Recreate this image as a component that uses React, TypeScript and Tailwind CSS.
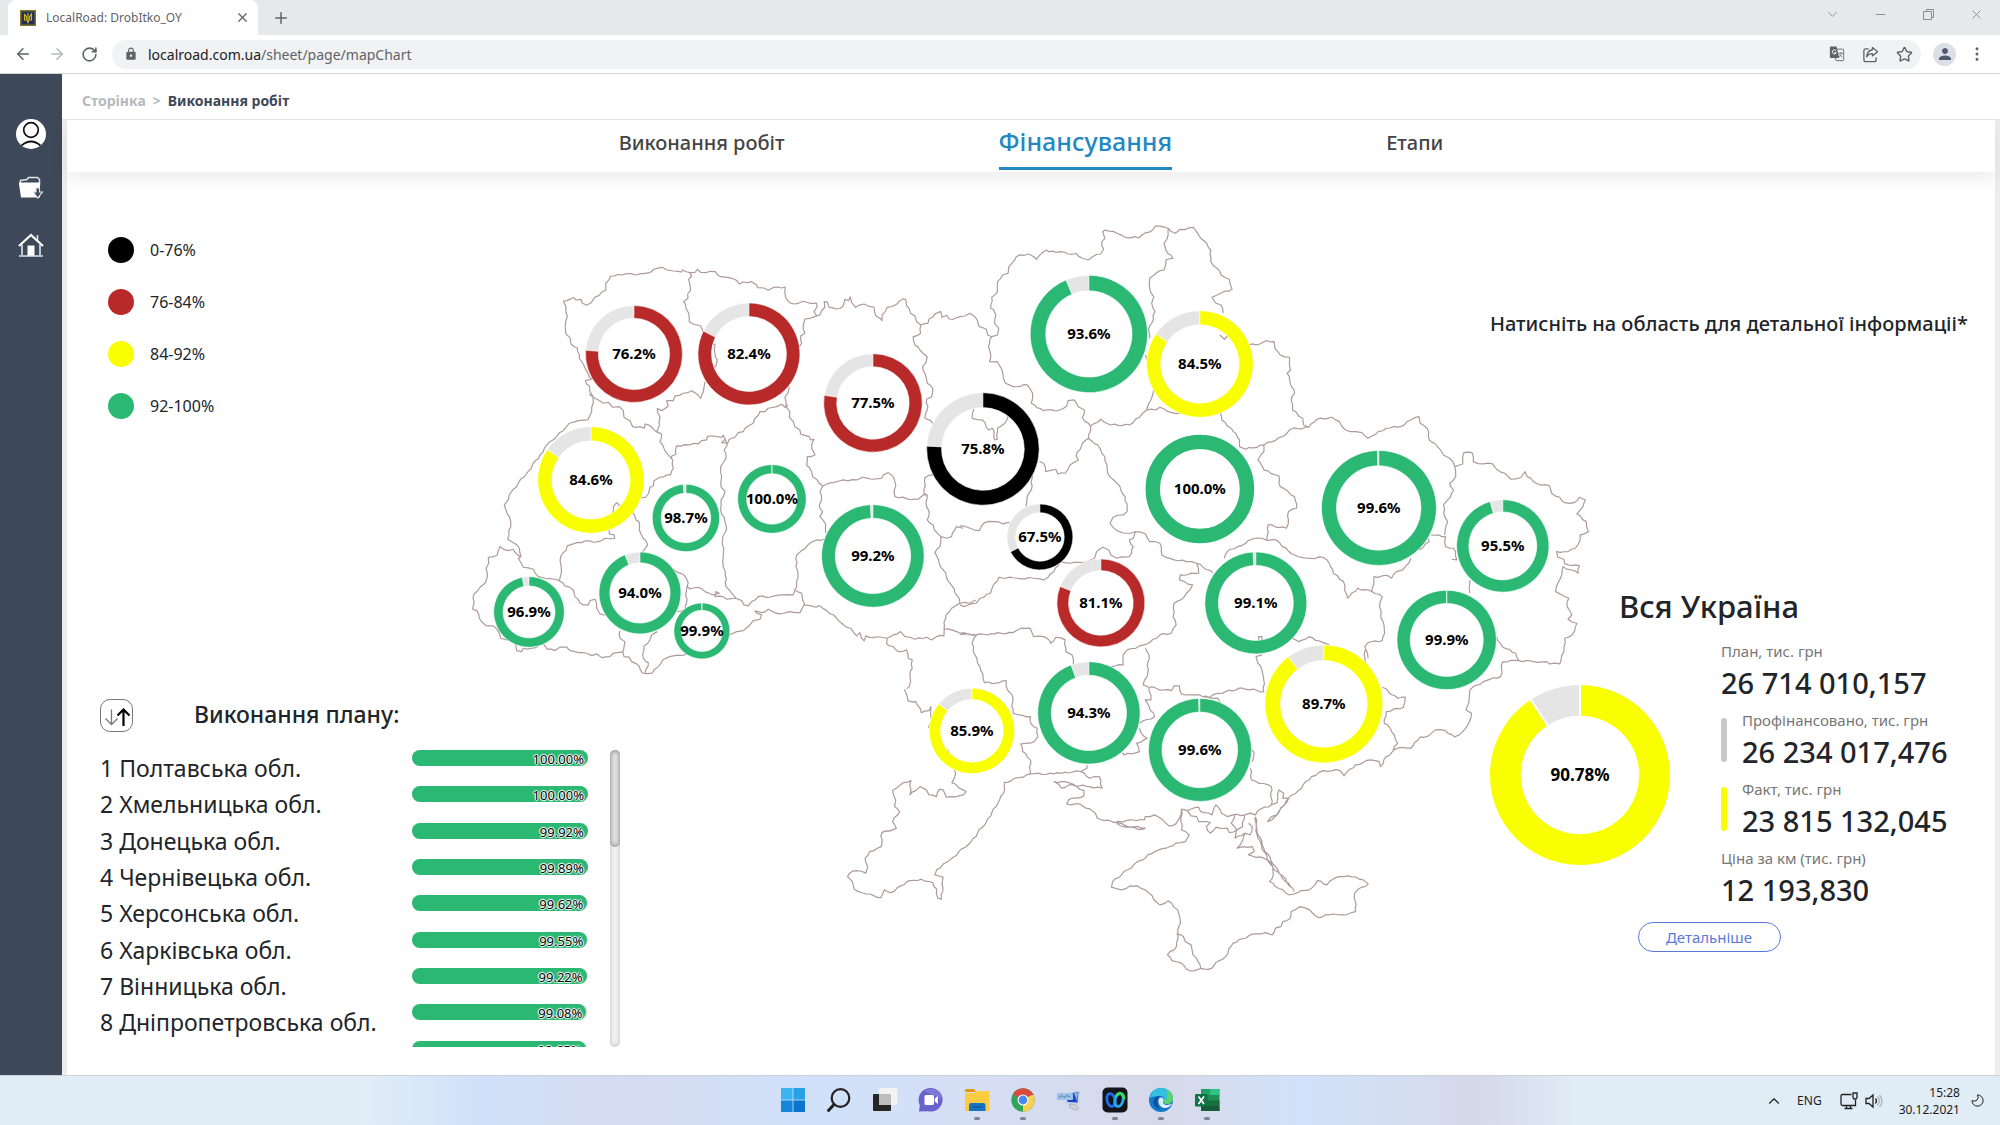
import React from "react";
import { ArrowLeft, ArrowRight, RotateCw, Plus, X, ChevronDown, ChevronUp, Minus, Star, MoreVertical, Moon } from "lucide-react";
import { MdLock, MdPerson } from "react-icons/md";

/* ---------- Map of the regions ---------- */

type Sheet = { ox: number; oy: number; sx: number; sy: number; lines: string[] };

// Border lines, kept per survey sheet: origin, units per pixel, polylines.
const SHEETS: Sheet[] = [
  {
    ox: 460, oy: 210, sx: 3, sy: 3,
    lines: [
      "310,273 341,263 348,270 363,268 367,280 380,286 394,278 404,262 425,247 438,240 437,220 452,198 485,195 500,191 526,195 555,190 570,188 582,178 607,172 622,180 640,183 665,186 668,180 690,188 706,187 712,178 722,187 752,184 766,185 782,200 808,203 822,207 838,222 850,216 875,215 890,225 893,233 912,234 925,241 942,232 976,231 977,262 990,279 1015,280 1030,274 1050,280 1070,280 1071,292 1062,305 1070,318 1080,314 1095,292 1093,275 1102,276 1108,292 1130,297 1150,288 1155,268 1166,272 1171,260 1175,278 1187,292 1212,282 1242,291 1248,318 1262,326 1266,332 1267,314 1282,292 1310,283 1318,274 1330,266 1338,270 1340,287 1348,297 1352,310 1365,318 1370,335 1383,345 1404,340 1408,326 1418,322 1426,311 1443,305 1446,322 1460,316 1468,327 1480,328 1500,320 1515,318 1530,310 1545,320 1552,330 1558,350",
      "310,273 318,290 322,320 316,345 318,372 330,383 333,402 352,414 358,445 370,462 378,480 395,508 377,512 380,523 388,527 390,545 399,560 400,580 395,605 383,630 355,632 328,640 310,662 270,695 240,735 200,790 160,838 133,885 138,900 148,920 152,950 143,988 160,998 178,1015 180,1030 183,1040 165,1027 160,1018 145,1022 120,1010 112,1035 85,1042 86,1060 78,1075 82,1100 75,1120 60,1132 42,1152 38,1198 50,1202 58,1225 80,1248 100,1248 118,1270 122,1285 140,1290 160,1285 168,1310 170,1322 185,1325 190,1315 215,1315 250,1302 262,1318 285,1322 300,1312 320,1312 330,1322 355,1328 380,1330 395,1337 410,1332 425,1343 450,1340 460,1330 488,1326 492,1340 508,1342 515,1355 530,1362 548,1390 576,1390 595,1370 608,1350 640,1338 680,1332",
      "805,1275 830,1265 850,1262 870,1245 880,1232 900,1228 905,1215 890,1210 885,1203 905,1208 925,1198 945,1208 970,1210 990,1205 1020,1208 1032,1185 1050,1187 1068,1192 1078,1187 1100,1202 1130,1225 1145,1240 1160,1252 1172,1255 1183,1270 1190,1278 1200,1268 1205,1285 1213,1293 1218,1278 1240,1283 1265,1282 1282,1285 1300,1275 1322,1265 1335,1280 1365,1288 1400,1282 1415,1290 1430,1280 1452,1278 1453,1258 1475,1260 1500,1270 1545,1273",
      "1282,1285 1280,1302 1300,1310 1315,1325 1340,1320 1345,1345 1357,1350 1357,1375 1350,1395 1352,1415 1348,1430 1340,1437",
      "690,188 695,198 686,208 690,225 692,240 683,252 684,265 671,275 678,295 686,310 688,335 700,342 722,348 730,365 755,400 766,405 765,430 772,450 768,468 760,475",
      "735,515 730,545 722,565 712,553 695,542 670,550 645,558 640,572 620,572 625,588 605,602 592,596 600,620 598,648 590,665 605,672",
      "388,553 405,565 430,580 445,577 458,592 478,590 490,602 492,622 510,632 518,650 540,650 553,655 556,642 575,652 585,662 605,672 600,695 612,715 625,735 638,750 640,775 632,795 600,802 582,812 580,828 570,832 566,850 557,862 545,864",
      "635,745 635,738 648,733 650,708 675,704 715,702 725,692 740,690 742,680 770,680 785,682 790,676 796,688 785,698 803,700 808,688 825,682 835,668 850,665 865,648 880,640 885,625 900,605 915,605 925,595 950,590 965,583 975,592 985,585",
      "1070,318 1050,325 1035,327 1030,345 1035,370 1022,378 1025,400 1018,410",
      "988,530 985,548 975,562 978,590 990,605 988,622 1000,635 1005,650 1020,660 1022,672 1048,680 1052,690 1062,688 1055,715 1065,735 1042,740 1040,765 1050,775 1058,800 1070,808 1088,828",
      "796,688 802,705 793,720 798,745 782,770 785,800 783,830 795,845 783,870 782,900 795,935 800,955 788,990 790,1040 790,1070 796,1085 797,1128 810,1143 828,1165",
      "515,905 528,930 537,935 542,970 550,985 563,1005 548,1025",
      "456,912 460,890 470,878 480,888",
      "447,960 448,972 462,975 464,985 435,985 415,995 375,993 340,1002 322,1008 318,1022 302,1040 304,1075 298,1112",
      "183,1040 175,1045 190,1072 220,1078 235,1100 255,1105 275,1107 298,1112 315,1128 340,1140 345,1160 370,1185 385,1185 390,1172 405,1168 410,1195 420,1212 435,1216",
      "480,1262 480,1285 495,1295 490,1325",
      "592,1265 575,1275 570,1290 552,1308 550,1345 558,1355 565,1358 555,1390",
      "640,1078 655,1088 675,1098 685,1118 680,1135 678,1200 650,1204",
      "680,1128 690,1137 712,1132 735,1145 760,1155 778,1150 768,1145 765,1160 790,1160 800,1168 828,1165 845,1172 852,1185 865,1188 875,1175 895,1160 930,1162 970,1155 1000,1155 1005,1140 1010,1130 1015,1100 1008,1070 1010,1035 1025,1022 1050,1000 1070,990 1092,988",
      "1005,1140 1025,1150 1028,1170 1035,1185",
      "1088,828 1080,845 1085,870 1078,885 1088,905 1080,920 1097,942 1097,970",
      "1088,828 1120,818 1150,810 1190,810 1208,802 1235,808 1265,805 1270,795 1285,788 1300,800 1305,815 1305,860 1340,866 1375,868 1390,855 1400,855",
      "1383,345 1382,370 1360,380 1365,405 1380,420 1402,440 1398,458 1388,470 1395,490 1402,520 1418,535 1415,560 1400,568 1402,600 1395,625 1412,632 1420,642",
      "1420,795 1395,803 1392,850 1402,855 1400,890 1408,905 1402,930 1420,945 1430,968 1443,980 1440,1010 1425,1028 1438,1060 1450,1080 1470,1120 1498,1165 1500,1180 1475,1195 1458,1215 1452,1258",
      "1443,980 1460,985 1475,980 1490,950 1510,955",
      "1500,1180 1530,1180 1548,1170",
    ],
  },
  {
    ox: 960, oy: 210, sx: 2.45, sy: 3,
    lines: [
      "47,350 65,358 68,375 78,380 92,375 95,355 85,340 88,315 82,298 75,295 78,262 92,245 92,215 105,195 118,190 120,170 138,140 168,132 188,148 200,130 212,120 218,125 245,125 265,132 285,130 300,145 315,150 325,140 345,132 352,118 348,95 355,85 350,65 355,60 385,70 405,82 430,80 438,84 455,68 472,60 480,48 510,55 528,70 540,58 572,52 580,65 590,85 605,100 615,120 615,155 630,175 640,195 660,208 667,238 640,250 618,262 628,280 640,285 645,310",
      "637,375 648,388 658,375",
      "708,405 735,402 750,392 770,395 772,415 785,435 808,442 810,480 802,490 808,510 820,550 812,570 815,600 840,625 842,645 855,652 875,628 912,622 930,635 945,660 970,665 985,668 1000,685 1025,665 1045,655 1080,650 1105,630 1125,620 1128,640 1145,655 1150,690 1170,710 1185,735 1200,745 1213,770 1232,762 1235,728 1255,728 1258,755 1282,762 1305,762 1315,778 1335,790 1350,808 1375,802 1385,785 1390,800 1412,820 1445,828 1450,850 1470,862 1482,878 1505,878 1518,862 1533,870 1520,900 1512,912 1535,935 1540,965 1520,975 1520,990 1508,1015 1490,1025 1462,1025 1465,1042 1480,1048 1482,1062 1518,1068 1515,1090 1478,1070 1475,1095 1465,1120 1460,1145 1475,1155 1492,1165 1488,1190 1500,1215 1490,1228 1512,1240 1500,1275 1482,1285 1480,1325 1470,1362 1445,1362 1438,1355 1405,1355 1370,1352 1362,1330 1330,1312 1315,1280",
      "1370,1352 1330,1355 1325,1400 1290,1412 1258,1430 1250,1440 1248,1465 1240,1500 1254,1510 1248,1536 1230,1568 1212,1581 1190,1562 1165,1560 1148,1578 1127,1581",
      "510,55 510,75 500,100 505,120 522,145 505,150 500,180 482,188 465,205 465,235 475,260 470,280 478,305 470,340 462,360 465,385",
      "455,435 460,455",
      "475,540 468,570 458,600",
      "78,380 70,410 75,430 72,455 92,455 105,490 112,520 130,530 165,525 178,550 175,580 205,602 245,600 262,588 265,572 280,570 290,590 305,600 300,622 320,648 345,628 370,645 415,645 440,622 458,600 480,600 490,592 510,605 560,615",
      "320,648 315,685 300,700 285,738 290,750 270,765 258,790 240,792 235,778 210,785 205,760 195,755",
      "178,795 175,840 165,860 162,890",
      "315,685 338,705 355,740 362,790 385,820 405,860 410,905 400,915 375,922 368,940 385,962 410,970 430,965 425,985 415,990 425,1010 415,1040 385,1045 370,1035 365,1020 350,1012 335,1025 330,1045 300,1058 270,1060 245,1055 230,1085 205,1110 180,1105 140,1105 95,1102 80,1130 75,1150 50,1165 40,1180 10,1190 0,1185",
      "430,965 455,972 465,995 490,1000 495,1035 525,1050 555,1055 580,1060 585,1090 540,1095 538,1110 570,1125 555,1150 550,1160 525,1180 522,1220 530,1245 518,1270 490,1275 482,1285 450,1305 410,1320 400,1335 400,1365 370,1370",
      "580,1060 620,1088",
      "648,1045 655,1025 680,1010 700,1000 715,988 740,985 755,992 775,990 790,1010 820,1035 850,1045 890,1042 905,1060 915,1090 940,1115 950,1165 975,1135 1010,1145 1015,1100 1050,1098 1058,1105 1070,1085 1085,1080 1100,1060 1105,1045",
      "1125,1020 1150,995 1145,980",
      "1155,975 1190,980 1190,1010 1210,1015 1218,1050 1205,1048",
      "855,652 810,658 790,680 745,705 745,725 730,750 745,780 782,798 785,830 820,860 825,895 805,905 805,930 800,955 755,945 752,990",
      "638,605 642,630 665,655 685,690 685,710 700,718 745,705",
      "1213,770 1215,800 1200,820 1210,840 1195,870 1185,885 1188,920 1195,935 1188,975",
      "1250,1110 1250,1150",
      "1010,1145 1035,1160 1028,1190 1040,1260 1035,1292 1000,1298 992,1310 1000,1345",
      "732,1292 732,1280 740,1280 740,1292",
      "815,1285 830,1295 855,1280 890,1298 905,1305",
      "0,1273 40,1275 75,1272 130,1268 150,1255 172,1255 180,1280 205,1280 220,1292 222,1300 235,1282 258,1290 260,1325 275,1335 278,1365",
      "0,948 25,955 48,962 60,938 85,935 105,942 122,938",
      "35,595 30,625 55,630 70,660 80,655 85,690 92,688 92,655 110,640 118,618 108,600",
    ],
  },
  {
    ox: 820, oy: 600, sx: 2.6133, sy: 3,
    lines: [
      "410,105 398,130 405,165 418,200 430,248 460,250 487,243 490,270 502,285 505,340 520,345 550,350 552,372 568,385 570,410 560,425 525,432 530,455 550,480 550,522",
      "850,145 860,165 855,230 845,255 860,262 865,300 850,300 860,320 875,350 835,370",
      "862,262 900,270 920,272 925,258 940,258 945,282 980,285 1010,292 1060,275 1105,265 1160,275 1160,240 1155,210 1145,190 1140,170 1155,165",
      "835,385 840,400 855,415 828,430 835,455 795,465 790,458",
      "220,268 230,302 250,305 265,338 285,332 290,320 292,360 283,385",
      "335,450 340,470 352,470",
      "352,510 355,520 345,548 382,575 375,585 345,590 330,592 322,570 312,568 305,590 285,585 278,570 262,560 250,572 235,585 238,542 210,555 190,572 198,600 195,620 208,635 190,665 200,685 162,698 160,740 130,755 118,775 125,800 120,820 95,812 78,820 72,830 85,845 90,868 120,882 160,893 168,870 185,878 210,858 235,842 265,838 295,848 305,868 308,895 318,898 322,832 300,825 305,810 340,780 395,725 435,665 465,610 480,580 482,548 550,522 612,522 640,517 682,515 698,505 698,495",
      "682,515 705,535 730,530 738,565 705,560 650,555 632,565 612,545 650,548 690,572 690,588 650,600 645,612 680,612 720,640 725,655 770,668 810,660 848,660 850,650 875,645 900,665 912,678 930,672 940,655 945,628 960,632 990,622 995,635 1025,645 1035,615 1050,640 1065,650 1080,645 1110,645 1125,640 1138,645 1145,632 1180,615 1195,608 1200,570 1212,580 1210,595 1225,595 1205,625 1190,650 1170,665 1180,650 1195,645 1225,595 1250,572 1285,530 1315,512 1360,512 1370,528 1378,515 1400,495 1440,480 1462,485 1465,500 1480,470 1510,445 1545,445 1568,412",
      "775,668 800,678 850,685 845,688 800,682 775,670",
      "945,628 945,690 965,705 955,725 930,730 905,745 875,755 820,795 765,845 762,862 788,870 810,858 830,858 860,880 888,915 910,903 935,930 942,970 935,1000 932,1040 908,1065 920,1082 945,1090 965,1112 1025,1105 1035,1088 1060,1070 1080,1030 1130,1003 1165,998 1182,1005 1190,985 1205,980 1210,965 1230,955 1232,935 1255,920 1280,930 1303,953 1330,945 1365,945 1400,935 1398,880 1415,862 1425,860 1433,852 1420,840 1380,828 1345,835 1325,855 1300,842 1285,865 1250,878 1225,885 1175,845 1185,825 1180,790 1160,775 1120,765 1135,755 1130,740 1105,740 1090,745 1105,720 1110,700 1085,715 1090,690 1070,698 1065,685 1035,682 1020,700 1010,680 1020,668 990,665 985,650 970,648 960,632",
      "932,1003 950,1010 955,1025 970,1035 975,1065 988,1085 995,1105",
      "1138,650 1142,690 1160,745 1190,800 1240,875",
      "1136,655 1145,715 1175,790 1230,860",
      "1085,645 1075,670 1090,690 1105,680 1110,645",
      "1110,700 1125,705 1130,680 1120,670",
      "1470,262 1510,295 1530,292 1525,322 1480,335 1475,370 1490,385 1510,430 1498,450",
      "1425,190 1425,150",
      "1130,450 1135,460 1130,485",
      "1125,505 1128,540 1180,560 1180,615",
      "1000,290 1040,295 1045,305",
    ],
  },
];

// Long straight runs get small repeatable kinks so that they read as natural borders.
function toPath(sheet: Sheet, line: string): string {
  const pts = line.split(" ").map((p) => {
    const [x, y] = p.split(",").map(Number);
    return [sheet.ox + x / sheet.sx, sheet.oy + y / sheet.sy];
  });
  let d = `M${pts[0][0].toFixed(1)} ${pts[0][1].toFixed(1)}`;
  for (let i = 1; i < pts.length; i++) {
    const [ax, ay] = pts[i - 1];
    const [bx, by] = pts[i];
    const len = Math.hypot(bx - ax, by - ay);
    const steps = Math.floor(len / 3.5);
    for (let k = 1; k < steps; k++) {
      const t = k / steps;
      const h = Math.sin((ax + bx * 1.7 + ay * 3.1 + k * 12.9) * 43.7);
      const off = h * 0.9;
      const x = ax + (bx - ax) * t - ((by - ay) / len) * off;
      const y = ay + (by - ay) * t + ((bx - ax) / len) * off;
      d += `L${x.toFixed(1)} ${y.toFixed(1)}`;
    }
    d += `L${bx.toFixed(1)} ${by.toFixed(1)}`;
  }
  return d;
}

const BORDERS = SHEETS.map((s) => s.lines.map((l) => toPath(s, l)).join("")).join("");

/* ---------- Data ---------- */

const BLACK = "#000000";
const RED = "#b82a2a";
const YELLOW = "#f9ff00";
const GREEN = "#2ab873";
const REST = "#e5e5e5";

function colorOf(v: number) {
  return v < 76 ? BLACK : v < 84 ? RED : v < 92 ? YELLOW : GREEN;
}

type Region = [x: number, y: number, r: number, value: number];

const REGIONS: Region[] = [
  [634, 354, 48.5, 76.2], [749, 354, 51, 82.4], [873, 403, 49.3, 77.5], [591, 480, 53.2, 84.6],
  [686, 518, 33.7, 98.7], [772, 499, 34.3, 99.97], [873, 556, 51.3, 99.2], [640, 593, 41, 94.0],
  [529, 612, 35.3, 96.9], [702, 631, 28, 99.9], [1089, 334, 58.7, 93.6], [1200, 364, 53.3, 84.5],
  [983, 449, 56.3, 75.8], [1040, 537, 33, 67.5], [1200, 489, 54.3, 100], [1379, 508, 57.5, 99.6],
  [1503, 546, 46.2, 95.5], [1101, 603, 44, 81.1], [1256, 603, 51, 99.1], [1447, 640, 49.7, 99.9],
  [972, 731, 42.7, 85.9], [1089, 713, 51.2, 94.3], [1200, 750, 51.5, 99.6], [1324, 704, 59, 89.7],
];

const PLAN: [string, number][] = [
  ["Полтавська обл.", 100], ["Хмельницька обл.", 100], ["Донецька обл.", 99.92],
  ["Чернівецька обл.", 99.89], ["Херсонська обл.", 99.62], ["Харківська обл.", 99.55],
  ["Вінницька обл.", 99.22], ["Дніпропетровська обл.", 99.08], ["Житомирська обл.", 98.65],
];

/* ---------- Charts ---------- */

function sector(cx: number, cy: number, r: number, q: number, a: number, b: number) {
  const pt = (rad: number, t: number) => {
    const w = (t * 2 - 0.5) * Math.PI;
    return `${(cx + rad * Math.cos(w)).toFixed(2)} ${(cy + rad * Math.sin(w)).toFixed(2)}`;
  };
  const big = b - a > 0.5 ? 1 : 0;
  return `M${pt(r, a)}A${r} ${r} 0 ${big} 1 ${pt(r, b)}L${pt(q, b)}A${q} ${q} 0 ${big} 0 ${pt(q, a)}Z`;
}

function Donut({ cx, cy, r, hole, value, gap }: { cx: number; cy: number; r: number; hole: number; value: number; gap: number }) {
  if (value === 100) {
    const w = r - r * hole;
    return <circle cx={cx} cy={cy} r={r - w / 2} fill="none" stroke={GREEN} strokeWidth={w} />;
  }
  const t = value / 100;
  return (
    <g stroke="#fff" strokeWidth={gap}>
      <path d={sector(cx, cy, r, r * hole, t, 1)} fill={REST} />
      <path d={sector(cx, cy, r, r * hole, 0, t)} fill={colorOf(value)} />
    </g>
  );
}

function UkraineMap() {
  return (
    <svg viewBox="466 215 1130 765" className="mt-[43px] w-[58.6%] self-start justify-self-center [grid-area:1/1/2/4]" role="img" aria-label="Мапа областей">
      <path d={BORDERS} fill="none" stroke="#ae9a9a" strokeWidth={1.2} strokeLinejoin="round" />
      {REGIONS.map(([x, y, r, v]) => (
        <g key={`${x}-${y}`}>
          <Donut cx={x} cy={y} r={r} hole={0.735} value={v} gap={0.6} />
          <text x={x} y={y + 5} textAnchor="middle" className="fill-black text-[15px] font-bold">
            {v.toFixed(1)}%
          </text>
        </g>
      ))}
    </svg>
  );
}

/* ---------- Page panels ---------- */

function Legend() {
  const items: [string, string][] = [["0-76%", "bg-black"], ["76-84%", "bg-[#b82a2a]"], ["84-92%", "bg-[#f9ff00]"], ["92-100%", "bg-[#2ab873]"]];
  return (
    <ul className="flex flex-col gap-[26px] pl-2">
      {items.map(([label, color]) => (
        <li key={label} className="flex h-[26px] items-center gap-4 text-[16px] text-[#212529]">
          <span className={`size-[26px] rounded-full ${color}`} />
          {label}
        </li>
      ))}
    </ul>
  );
}

function PlanList() {
  return (
    <section className="mt-[280px]">
      <div className="flex h-[33px] items-center">
        <button aria-label="Сортувати" className="flex size-[33px] items-center justify-center rounded-[10px] border-[1.5px] border-[#777]">
          <svg viewBox="0 0 30 30" className="size-[30px]" fill="none">
            <path d="M9.500 8.500v15M3.500 17.500l6 6 6-6" stroke="#777" strokeWidth="1.300" />
            <path d="M21.500 25v-16M15.500 14.500l6-6 6 6" stroke="#000" strokeWidth="2.200" />
          </svg>
        </button>
        <h2 className="ml-[61px] pb-0.5 text-[23px] font-medium text-[#212529]">Виконання плану:</h2>
      </div>
      <div className="mt-[18px] flex h-[297px] overflow-hidden">
        <ol className="grid h-[327px] w-[488px] grid-rows-9">
          {PLAN.map(([name, value], i) => (
            <li key={name} className="flex items-start">
              <span className="w-[312px] pt-0.5 text-[23px] leading-8 text-[#212529]">{i + 1} {name}</span>
              <span className="h-4 w-[176px] rounded-full bg-[#e5e5e5]">
                <span className="block h-4 rounded-full bg-[#2ab873] pr-1 text-right text-[13px] leading-[18px] text-black [text-shadow:1px_0_1px_#fff,-1px_0_1px_#fff,0_1px_1px_#fff,0_-1px_1px_#fff,0_0_2px_#fff]" style={{ width: `${value}%` }}>
                  {value.toFixed(2)}%
                </span>
              </span>
            </li>
          ))}
        </ol>
        <div className="ml-[22px] w-2.5 rounded-full bg-[#f3f3f3] shadow-[inset_0_0_5px_#bbb]">
          <div className="h-[97px] rounded-full bg-[#e2e2e2] shadow-[inset_0_0_5px_#777]" />
        </div>
      </div>
    </section>
  );
}

function Stat({ label, value, bar }: { label: string; value: string; bar?: string }) {
  return (
    <div className="flex items-center gap-[15px]">
      {bar && <span className={`h-11 w-[6px] rounded-full ${bar}`} />}
      <dl>
        <dt className="text-[15px] leading-6 text-[#777]">{label}</dt>
        <dd className="text-[29px] font-medium leading-10 whitespace-nowrap text-[#212529]">{value}</dd>
      </dl>
    </div>
  );
}

function Summary() {
  return (
    <section className="z-10 flex flex-col items-end pt-[138px] pr-[27px] [grid-area:1/3]">
      <p className="text-[20px] font-medium leading-7 whitespace-nowrap text-[#212529]">Натисніть на область для детальної інформаціі*</p>
      <div className="mt-[248px] mr-3 flex w-[494px] flex-col items-center">
        <h2 className="text-[31px] font-medium leading-10 text-[#212529]">Вся Україна</h2>
        <div className="mt-[13px] flex w-full items-center pl-[27px]">
          <svg viewBox="0 0 182 182" className="size-[182px] shrink-0">
            <Donut cx={91} cy={91} r={91} hole={0.64} value={90.78} gap={2} />
            <text x={91} y={97} textAnchor="middle" className="fill-black text-[17px] font-bold">90.78%</text>
          </svg>
          <div className="ml-[50px] flex flex-col gap-[5px]">
            <Stat label="План, тис. грн" value="26 714 010,157" />
            <Stat label="Профінансовано, тис. грн" value="26 234 017,476" bar="bg-[#c8c8c8]" />
            <Stat label="Факт, тис. грн" value="23 815 132,045" bar="bg-[#f9ff00]" />
            <Stat label="Ціна за км (тис. грн)" value="12 193,830" />
          </div>
        </div>
        <button className="mt-3 h-[30px] w-[143px] rounded-full border-[1.5px] border-[#5b78dc] text-[15px] leading-7 text-[#5b78dc]">Детальніше</button>
      </div>
    </section>
  );
}

/* ---------- Browser frame ---------- */

function BrowserBar() {
  return (
    <header>
      <div className="flex h-[35px] items-center bg-[#e5e9ec] pl-2">
        <div className="flex h-[35px] w-[250px] items-center rounded-t-lg bg-white pr-2 pl-3 text-[12px] text-[#5f6368]">
          <svg viewBox="0 0 16 16" className="size-4">
            <rect width="16" height="16" fill="#7d7420" />
            <rect x="1.500" y="1.500" width="13" height="13" fill="#23305c" />
            <path d="M4.500 4v6h2.500l1 2.500 1-2.500h2.500V4l-2 3v2M4.500 4l2 3v2M8 3v7" fill="none" stroke="#d9b91c" strokeWidth="1.100" />
          </svg>
          <span className="ml-2.5 flex-1">LocalRoad: DrobItko_OY</span>
          <button aria-label="Закрити вкладку"><X className="size-[15px]" /></button>
        </div>
        <button aria-label="Нова вкладка" className="ml-3.5 text-[#5f6368]"><Plus className="size-[18px]" /></button>
        <div className="ml-auto flex items-center gap-[33px] pr-4 pb-1.5 text-[#8a8d90]">
          <ChevronDown className="size-[15px]" strokeWidth={1.5} />
          <Minus className="size-[15px]" strokeWidth={1.5} />
          <svg viewBox="0 0 15 15" className="size-[15px]" fill="none" stroke="currentColor">
            <path d="M2.500 4.500h8v8h-8zM5.500 4.500v-2h7v8h-2" />
          </svg>
          <X className="size-[15px]" strokeWidth={1.5} />
        </div>
      </div>
      <div className="flex h-[39px] items-center border-b border-[#d5d5d5] bg-white pr-3.5 pl-3.5 text-[#5f6368]">
        <button aria-label="Назад"><ArrowLeft className="size-[18px]" /></button>
        <button aria-label="Вперед" className="ml-4 text-[#b5b8bb]"><ArrowRight className="size-[18px]" /></button>
        <button aria-label="Оновити" className="ml-[15px]"><RotateCw className="size-[17px]" strokeWidth={2.3} /></button>
        <div className="ml-[14px] flex h-[29px] flex-1 items-center rounded-full bg-[#f0f2f4] pr-2 pl-3">
          <MdLock className="size-[14px]" />
          <div className="ml-2.5 flex-1 text-[14px]"><span className="text-[#202124]">localroad.com.ua</span>/sheet/page/mapChart</div>
          <div className="flex items-center gap-[17px]">
            <svg viewBox="0 0 16 18" className="h-4 w-4">
              <rect x="6.500" y="3.500" width="9" height="13" rx="1" fill="none" stroke="#5f6368" />
              <path d="M1 .5h6.500l3 13H1a1 1 0 0 1-1-1v-11a1 1 0 0 1 1-1z" fill="#5f6368" />
              <path d="M6.800 5.200a2.300 2.300 0 1 0 .4 2.300H5" fill="none" stroke="#fff" strokeWidth="1.100" />
              <path d="M9.500 8h5M12 7v1M13.500 8c-.5 2-2 3.500-3 4M10.800 9.500c.7 1.500 2 2.500 3 3" fill="none" stroke="#5f6368" strokeWidth=".9" />
            </svg>
            <svg viewBox="0 0 18 18" className="size-[17px]" fill="none" stroke="#5f6368" strokeWidth="1.400">
              <path d="M7 3H4a2 2 0 0 0-2 2v9.500a2 2 0 0 0 2 2h9a2 2 0 0 0 2-2V12" />
              <path d="M11 1.500l5.500 4.500-5.500 4.500V8c-3 0-5 1-6 3.500.3-4 2.500-7 6-7.500z" strokeLinejoin="round" />
            </svg>
            <Star className="size-[17px]" />
          </div>
        </div>
        <span className="ml-3 flex size-[23px] items-center justify-center rounded-full bg-[#dbe0e6] text-[#4f5b6e]"><MdPerson className="size-[18px]" /></span>
        <button aria-label="Меню" className="ml-3"><MoreVertical className="size-[18px]" /></button>
      </div>
    </header>
  );
}

function Sidebar() {
  return (
    <aside className="flex w-[62px] flex-col items-center bg-[#3d4858] pt-[45px]">
      <a href="#profile" aria-label="Профіль">
        <svg viewBox="0 0 30 30" className="size-[30px]">
          <circle cx="15" cy="15" r="15" fill="#fff" />
          <circle cx="15" cy="11" r="7.300" fill="none" stroke="#111" strokeWidth="1.700" />
          <path d="M5.500 26.500q9.500-8 19 0" fill="none" stroke="#111" strokeWidth="1.700" />
        </svg>
      </a>
      <a href="#files" aria-label="Файли" className="mt-[27px]">
        <svg viewBox="0 0 26 24" className="h-6 w-[26px]">
          <path d="M2 9L2.500 4.500 9 3.500l1.500-2H19.500l2 2V9" fill="none" stroke="#dfe5ea" strokeWidth="1.500" />
          <path d="M.8 6.500H22V21.500H3Z" fill="#fff" />
          <path d="M18 12h3.500v4h2.800l-4.500 6-4.500-6H18z" fill="#3d4858" stroke="#dfe5ea" strokeWidth="1.200" />
        </svg>
      </a>
      <a href="#home" aria-label="Головна" className="mt-[33px]">
        <svg viewBox="0 0 26 24" className="h-6 w-[26px]">
          <path d="M1 13L13 2l12 11" fill="none" stroke="#fff" strokeWidth="2.200" />
          <path d="M4 11.500V22M22 11.500V22M19.500 2v5" fill="none" stroke="#dfe5ea" strokeWidth="1.600" />
          <path d="M9.500 12.500h7V23h-7z" fill="#fff" />
          <path d="M1 23h24" stroke="#dfe5ea" strokeWidth="1.500" />
        </svg>
      </a>
    </aside>
  );
}

/* ---------- Taskbar ---------- */

const TASKS: { name: string; open: boolean; art: React.ReactNode }[] = [
  { name: "Start", open: false, art: (<g fill="#1487dc"><path d="M0 0h11.600v11.600H0z" fill="#3cb4f0" /><path d="M12.400 0H24v11.600H12.400z" fill="#28a0e8" /><path d="M0 12.400h11.600V24H0z" /><path d="M12.400 12.400H24V24H12.400z" fill="#0a74cf" /></g>) },
  { name: "Search", open: false, art: (<g fill="none" stroke="#222"><circle cx="13.500" cy="10" r="8.800" strokeWidth="2.200" /><path d="M7 16.500L1.500 22.500" strokeWidth="3" strokeLinecap="round" /></g>) },
  { name: "Task view", open: false, art: (<g><rect x="0" y="6" width="18" height="17" rx="1" fill="#262626" /><rect x="6" y="0" width="18.500" height="17" rx="1" fill="#f3f3f3" /><path d="M6 6h12v11H6z" fill="#bdbdbd" /></g>) },
  { name: "Chat", open: false, art: (<g><path d="M0 23.500L.8 17A12 11.800 0 1 1 9 23.300Z" fill="#6a62cc" /><path d="M24 12A12 11.800 0 0 0 5 3z" fill="#8a86dc" opacity=".6" /><rect x="5.500" y="7" width="9.500" height="10" rx="1.500" fill="#fff" /><path d="M15.800 10.500l3-2.500v8l-3-2.500z" fill="#fff" /></g>) },
  { name: "Explorer", open: true, art: (<g><path d="M0 2.500a1.500 1.500 0 0 1 1.500-1.500H9l2 3H0z" fill="#dc9a10" /><path d="M0 5h10l1.500-2H24.500V23H0z" fill="#ffcb40" /><path d="M4 17a2 2 0 0 1 2-2h12.500a2 2 0 0 1 2 2v6H4z" fill="#1673c4" /><path d="M7.500 19h9.500" stroke="#0c4f8c" strokeWidth="1" /></g>) },
  { name: "Chrome", open: true, art: (<g><circle cx="12" cy="12" r="11.700" fill="#33a35a" /><path d="M12 12L1.870 6.150A11.700 11.700 0 0 1 22.130 6.150Z" fill="#d94a3e" /><path d="M12 12L22.130 6.150A11.700 11.700 0 0 1 12 23.700Z" fill="#fbd04c" /><path d="M12 6.500H22.300" stroke="#d94a3e" strokeWidth="1" /><circle cx="12" cy="12" r="5.500" fill="#fff" /><circle cx="12" cy="12" r="4.400" fill="#4a87ee" /></g>) },
  { name: "Remote", open: false, art: (<g><path d="M7 5l16-2.500-1 14-14-1z" fill="#c9d4e4" /><path d="M9.500 6L21.500 4l-1 10.500-10-.5z" fill="#1f3fc8" /><path d="M17 5l4-.5-1 9z" fill="#8fb4ee" /><rect x="0" y="5" width="16" height="7" rx="1" fill="#9cc3e6" /><path d="M2 9.500l3-2 2 2 3-2 3 1.500" fill="none" stroke="#4d7ea8" strokeWidth="1" /><path d="M13 16l5 1 4 3-2 2-8-3z" fill="#d4d4d4" stroke="#9a9a9a" strokeWidth=".6" /></g>) },
  { name: "Webex", open: true, art: (<g><rect x="-.5" y="-.5" width="25" height="25" rx="5" fill="#131518" /><ellipse cx="8" cy="12" rx="4" ry="6.500" transform="rotate(-14 8 12)" fill="none" stroke="#1d6df0" strokeWidth="2.800" /><ellipse cx="16" cy="12" rx="4" ry="6.500" transform="rotate(14 16 12)" fill="none" stroke="#24a9ee" strokeWidth="2.800" /><path d="M13.500 7.500c3-4.500 7.500-1.500 7.500 3" fill="none" stroke="#35d860" strokeWidth="2.800" strokeLinecap="round" /></g>) },
  { name: "Edge", open: true, art: (<g><circle cx="12" cy="12" r="12" fill="#1478cc" /><path d="M.5 10C2 3 7 0 12 0c7 0 12 4.500 12 10 0 4-3 6-6 6-3.500 0-3.500-2-3-3 1-3-1-5-4-5-5 0-9 1-10.500 2z" fill="#35bfe0" /><path d="M17 1.500c4.500 1.800 7 5 7 8.500 0 4-3 6-6 6-2.500 0-3.500-1-3-2.500 3-2 5-7 2-12z" fill="#58d46a" /><path d="M9.500 13c0-3 2-4 3.500-3.500 2 1 2 3 1.200 4.500-.5 2 2 3.500 5 2.800 2.500-.5 3.500-1 3.500-.5-2 3-5.500 4.500-8.700 3.500-2.800-1-4.500-3.800-4.500-6.800z" fill="#e4ecfa" /><path d="M4.500 14c0-4 3-6 6-6-3 3-3.500 9 1 13-4 0-7-3-7-7z" fill="#0e4f9c" /></g>) },
  { name: "Excel", open: true, art: (<g><path d="M6 1h18.500v22H6z" fill="#1e8f50" /><path d="M15 1h9.500v6H15z" fill="#2fc282" /><path d="M6 1h9v6H6z" fill="#22a164" /><path d="M6 12.500h18.500v5H6z" fill="#17703e" /><path d="M6 17.500h18.500V23H6z" fill="#175c37" /><rect x="0" y="6" width="12.500" height="12.500" rx="1.200" fill="#107340" /><path d="M3.500 8.500l5.500 7.500M9 8.500l-5.500 7.500" stroke="#fff" strokeWidth="1.800" /></g>) },
];

function Taskbar() {
  return (
    <footer className="grid h-[50px] grid-cols-[1fr_auto_1fr] items-center border-t border-[#ccd3de] bg-[linear-gradient(90deg,#e1edf6_0%,#e1edf6_18%,#d0e1f9_24%,#d5dbf0_31%,#d0e1f9_40%,#d5dff6_48%,#d6d9e9_58%,#d2e2fa_65%,#d5d9e9_74%,#e1edf6_79%,#e1edf6_100%)]">
      <span />
      <nav className="flex gap-[22px]">
        {TASKS.map((t) => (
          <button key={t.name} aria-label={t.name} className="flex h-[42px] w-6 flex-col items-center pt-2">
            <svg viewBox="0 0 24 24" className="size-6 shrink-0 overflow-visible">{t.art}</svg>
            {t.open && <span className="mt-[5px] h-[3px] w-1.5 rounded-full bg-[#7d8390]" />}
          </button>
        ))}
      </nav>
      <div className="flex items-center justify-end pr-[15px] text-[12px] text-[#1c1c1c]">
        <ChevronUp className="size-[18px]" strokeWidth={1.5} />
        <span className="ml-3.5">ENG</span>
        <svg viewBox="0 0 18 18" className="ml-[18px] size-[18px]" fill="none" stroke="#222" strokeWidth="1.300">
          <path d="M11.500 2.500H2.500a1.500 1.500 0 0 0-1.500 1.500v8a1.500 1.500 0 0 0 1.500 1.500h13V8M6.500 13.500v3M10.500 13.500v3M4.500 16.500h8M13 1h4v4.500l-1 1.500h-2l-1-1.500z" />
        </svg>
        <svg viewBox="0 0 18 18" className="ml-[7px] size-[18px]" fill="none" stroke="#222" strokeWidth="1.300">
          <path d="M1 6.500h3L8 3v12l-4-3.500H1zM10.500 6.500q2 2.500 0 5" />
          <path d="M12.500 4.500q4 4.500 0 9M14.500 3q5 6 0 12" stroke="#aab4be" />
        </svg>
        <div className="ml-4 text-right leading-[17px]"><div>15:28</div><div>30.12.2021</div></div>
        <Moon className="ml-2.5 size-[15px] -rotate-90" strokeWidth={1.6} />
      </div>
    </footer>
  );
}

export default function App() {
  const tabs = ["Виконання робіт", "Фінансування", "Етапи"];
  return (
    <div className="flex min-h-screen flex-col bg-white font-['Noto_Sans','Open_Sans',sans-serif]">
      <BrowserBar />
      <div className="flex flex-1">
        <Sidebar />
        <div className="flex flex-1 flex-col">
          <nav className="flex h-[46px] items-center border-b border-[#e6e6e6] pt-2 pl-5 text-[14px] font-bold text-[#b4b9be]">
            <a href="#page">Сторінка</a>
            <span className="mx-[7px]">&gt;</span>
            <span className="text-[#3d4858]">Виконання робіт</span>
          </nav>
          <div className="flex flex-1 flex-col border-r-[5px] border-l-[5px] border-[#ededed]">
            <nav className="flex h-[52px] justify-center gap-[214px] shadow-[0_8px_16px_rgba(0,0,0,0.07)]">
              {tabs.map((t, i) =>
                i === 1 ? (
                  <button key={t} className="h-[50px] border-b-[3px] border-[#2388c2] pb-1 text-[25px] font-medium text-[#2388c2]">{t}</button>
                ) : (
                  <button key={t} className="h-[45px] text-[20px] font-medium text-[#444]">{t}</button>
                ),
              )}
            </nav>
            <main className="grid flex-1 grid-cols-[580px_1fr_560px]">
              <UkraineMap />
              <div className="z-10 pt-[65px] pl-[33px] [grid-area:1/1]">
                <Legend />
                <PlanList />
              </div>
              <Summary />
            </main>
          </div>
        </div>
      </div>
      <Taskbar />
    </div>
  );
}
